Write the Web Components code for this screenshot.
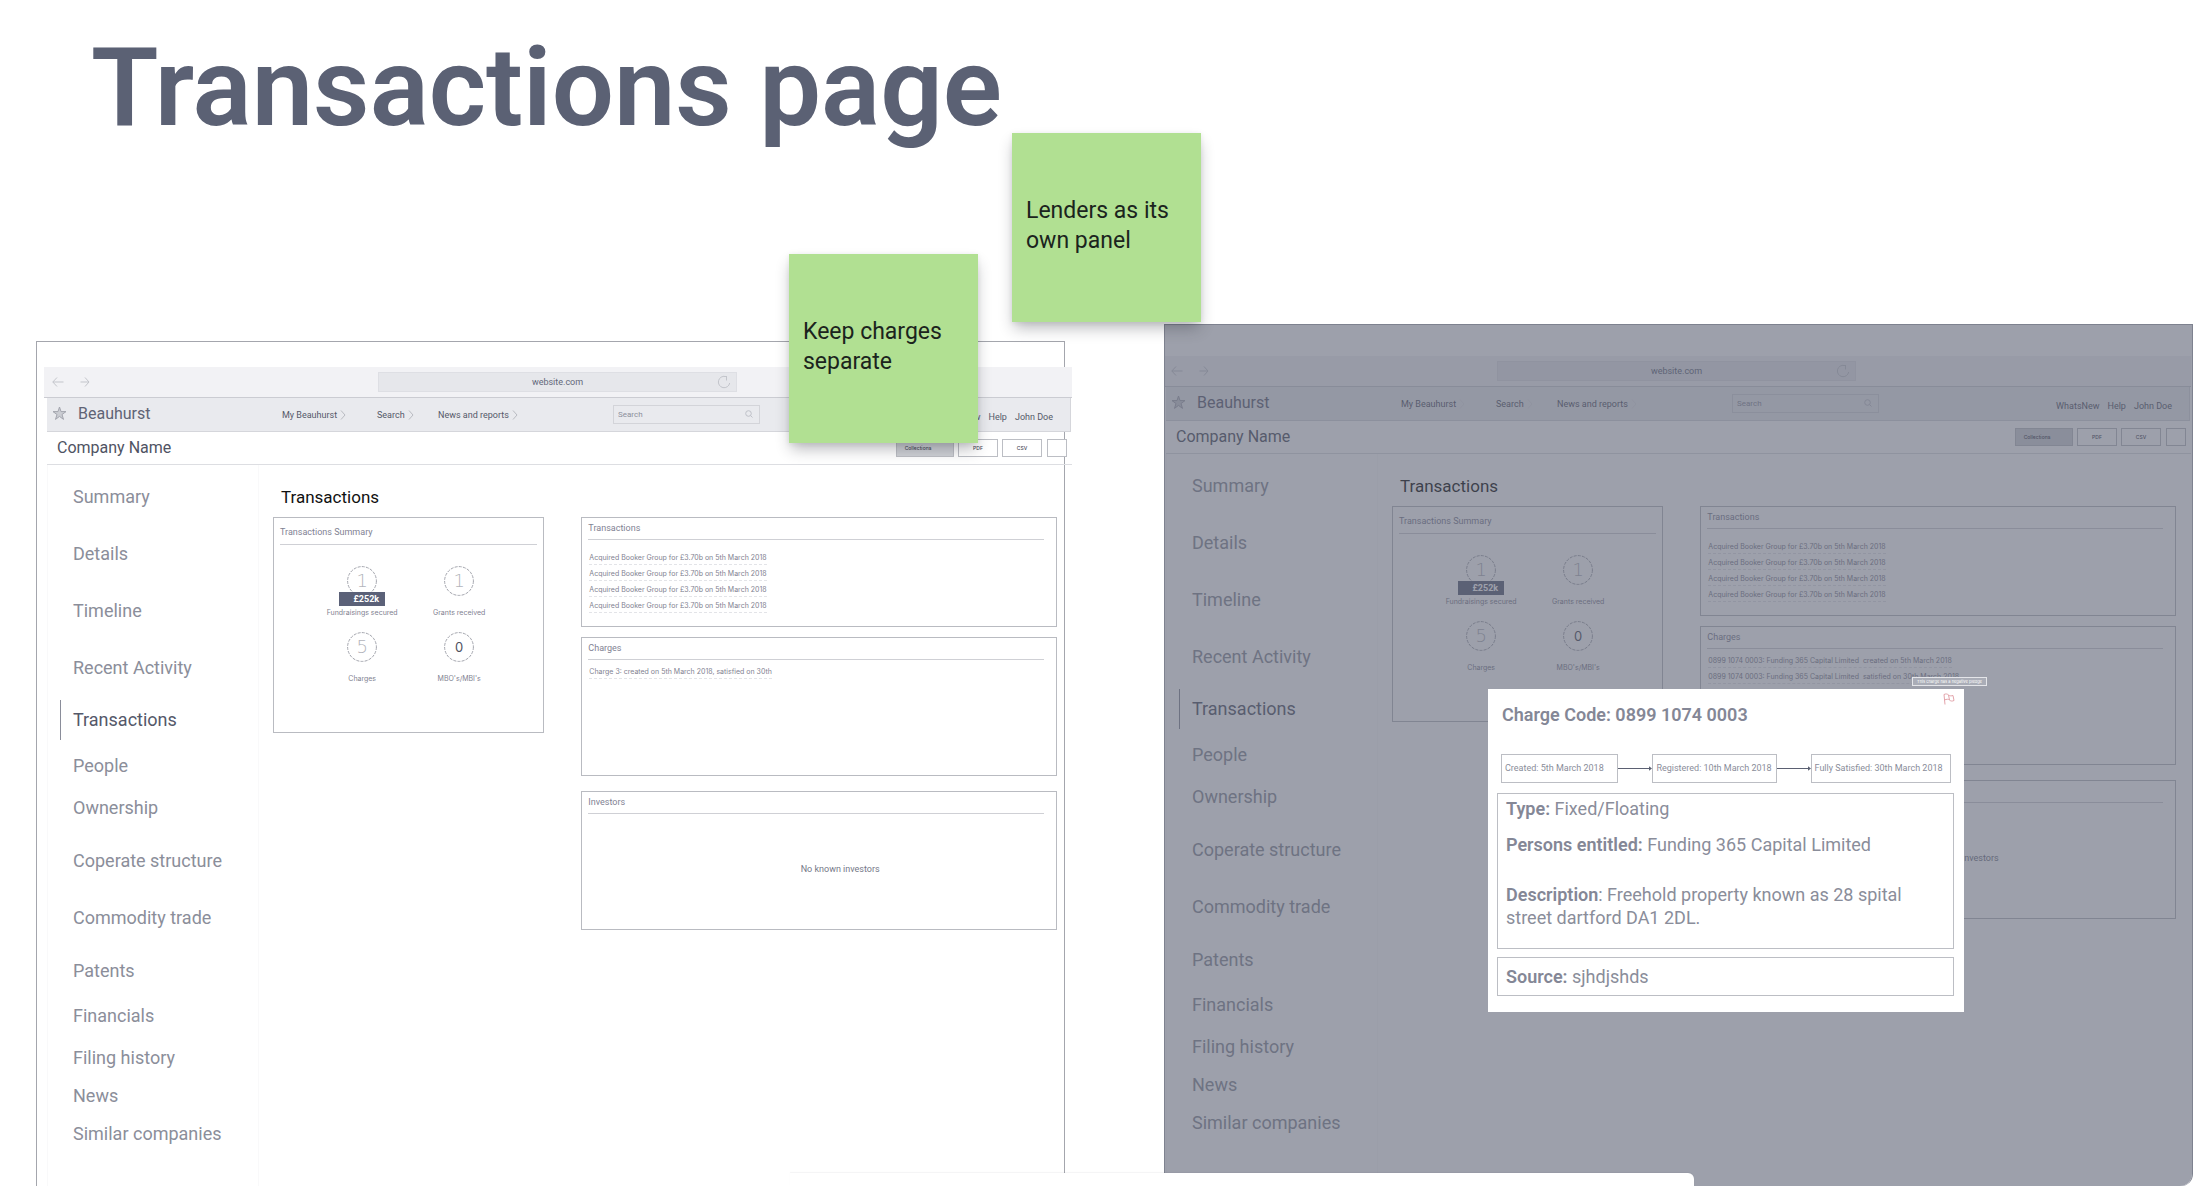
<!DOCTYPE html>
<html lang="en">
<head>
<meta charset="utf-8">
<title>Transactions page</title>
<style>
  body { margin: 0; background: #fff; font-family: Roboto, "Liberation Sans", sans-serif; }
</style>
</head>
<body>
<design-canvas>
  <span slot="title">Transactions page</span>
  <sticky-note slot="notes" class="charges">Keep charges separate</sticky-note>
  <sticky-note slot="notes" class="lenders">Lenders as its own panel</sticky-note>
  <company-board slot="boards" class="plain">
    <entry-row slot="charges">Charge 3: created on 5th March 2018, satisfied on 30th</entry-row>
  </company-board>
  <company-board slot="boards" class="dimmed">
    <entry-row slot="charges">0899 1074 0003: Funding 365 Capital Limited&nbsp; created on 5th March 2018</entry-row>
    <entry-row slot="charges">0899 1074 0003: Funding 365 Capital Limited&nbsp; satisfied on 30th March 2018</entry-row>
    <charge-dialog slot="dialog"></charge-dialog>
  </company-board>
</design-canvas>

<script>
function define(name, html) {
  const template = document.createElement('template');
  template.innerHTML = html;
  customElements.define(name, class extends HTMLElement {
    constructor() {
      super();
      this.attachShadow({ mode: 'open' }).append(template.content.cloneNode(true));
    }
  });
}

define('design-canvas', `
<style>
  :host { display: flex; flex-direction: column; position: relative; height: 100vh; overflow: hidden; }
  h1 { margin: 0; box-sizing: border-box; height: 324px; flex: none; padding: 33px 0 0 91px;
    font-size: 110px; line-height: 110px; font-weight: 600; color: #5b6174; }
  .boards { flex: 1; display: grid; grid-template-columns: 1fr 1fr; gap: 99px; padding: 0 7px 0 36px; }
  ::slotted(.plain) { margin-top: 17px; --top: 25px; --start: 7px; --end: -8px; }
  ::slotted(.dimmed) { --top: 31px; --start: -2px; --end: 1px; --dim: block; --chevron: #dfe0e4; }
  ::slotted(.charges) { left: 789px; top: 254px; }
  ::slotted(.lenders) { left: 1012px; top: 133px; }
  .tray { position: absolute; left: 790px; bottom: 0; width: 904px; height: 13px;
    background: #fff; border-top-right-radius: 6px; box-shadow: 0 -1px 1px rgba(70,74,90,.06); }
</style>
<h1><slot name="title"></slot></h1>
<div class="boards"><slot name="boards"></slot></div>
<slot name="notes"></slot>
<div class="tray"></div>
`);

define('sticky-note', `
<style>
  :host { position: absolute; z-index: 3; box-sizing: border-box; width: 189px; height: 189px; padding: 0 14px 3px;
    display: flex; align-items: center; background: #b1e092; color: #1b241d;
    font-size: 23px; line-height: 30px; box-shadow: 0 8px 14px -2px rgba(40,42,54,.32), 0 1px 5px rgba(40,42,54,.08); }
</style>
<span><slot></slot></span>
`);

define('entry-row', `
<style>
  :host { display: block; line-height: 12px; font-family: Inter, Roboto, sans-serif; font-size: 7px; color: #7f8291; }
  a { display: inline-block; color: inherit; text-decoration: none; border-bottom: 1px dashed #e3e4e8; }
</style>
<a href="#"><slot></slot></a>
`);

define('info-card', `
<style>
  :host { display: flex; flex-direction: column; box-sizing: border-box; border: 1px solid #b9bbc1; }
  h3 { margin: 0 12px 0 6px; padding: 3px 0 4px; font-size: 9px; line-height: 14px; font-weight: 400;
    color: #7f8293; border-bottom: 1px solid #cfd0d5; }
  :host(.summary) h3 { margin-right: 6px; padding: 7px 0 5px; }
  .body { flex: 1; display: flex; flex-direction: column; gap: 3px; padding: 12px 7px; }
  :host(.near) .body { padding-top: 6px; }
  :host(.centred) .body { align-items: center; justify-content: center; padding: 0 0 5px 42px;
    font-size: 9px; color: #757888; }
  :host(.summary) .body { padding: 21px 0 0 4px; }
</style>
<h3><slot name="heading"></slot></h3>
<div class="body"><slot></slot></div>
`);

define('stat-figure', `
<style>
  :host { position: relative; display: flex; flex-direction: column; align-items: center; gap: 12px; }
  .ring { position: relative; width: 30px; height: 30px; display: grid; place-items: center;
    font: 200 18px/30px "DejaVu Sans", sans-serif; color: #b2b4bb; }
  :host(.solid) .ring { font: 400 13px/30px Inter, Roboto, sans-serif; color: #4e515e; }
  svg { position: absolute; inset: 0; }
  .label { font-family: Inter, Roboto, sans-serif; font-size: 7px; line-height: 10px; white-space: nowrap; color: #7f8291; }
  ::slotted(b) { position: absolute; top: 26px; left: 50%; transform: translateX(-50%); box-sizing: border-box;
    width: 46px; padding-right: 6px; text-align: right; background: #5b6178; color: #fff;
    font-size: 9px; line-height: 14px; }
</style>
<div class="ring"><svg width="30" height="30" viewBox="0 0 30 30" fill="none" stroke="#a3a5ad" stroke-width="1" stroke-dasharray="3 1.2"><circle cx="15" cy="15" r="14.4"/></svg><slot name="value"></slot></div>
<div class="label"><slot></slot></div>
<slot name="badge"></slot>
`);

define('side-nav', `
<style>
  :host { display: block; width: 212px; flex: none; box-sizing: border-box; padding: 20px 0 26px 25px;
    border: solid #f9f9fa; border-width: 0 1px; }
  ul { list-style: none; margin: 0; padding: 0; font-size: 18px; line-height: 24px; }
  a { color: #8b8e9a; text-decoration: none; }
  li { margin-bottom: 33px; }
  .m { margin-bottom: 29px; } .s { margin-bottom: 21px; } .xs { margin-bottom: 18px; } .xxs { margin-bottom: 14px; }
  .active { margin: -9px 0 14px -13px; border-left: 1px solid #8a8d9a; padding-left: 12px; line-height: 40px; }
  .active a { color: #545869; }
</style>
<nav><ul>
  <li><a href="#">Summary</a></li>
  <li><a href="#">Details</a></li>
  <li><a href="#">Timeline</a></li>
  <li class="m"><a href="#">Recent Activity</a></li>
  <li class="active"><a href="#">Transactions</a></li>
  <li class="xs"><a href="#">People</a></li>
  <li class="m"><a href="#">Ownership</a></li>
  <li><a href="#">Coperate structure</a></li>
  <li class="m"><a href="#">Commodity trade</a></li>
  <li class="s"><a href="#">Patents</a></li>
  <li class="xs"><a href="#">Financials</a></li>
  <li class="xxs"><a href="#">Filing history</a></li>
  <li class="xxs"><a href="#">News</a></li>
  <li class="xxs"><a href="#">Similar companies</a></li>
</ul></nav>
`);

define('browser-bar', `
<style>
  :host { display: grid; grid-template-columns: 1fr 359px 335px; align-items: center; height: 30px;
    background: #f2f2f5; border-bottom: 1px solid #cbccd2; }
  .arrows { display: flex; gap: 16px; padding-left: 8px; }
  .url { display: grid; grid-template-columns: 20px 1fr 20px; align-items: center; height: 20px;
    background: #e6e7eb; box-shadow: inset 0 0 0 1px #dedfe4; text-align: center; font-size: 9px; color: #63677a; }
  svg { fill: none; stroke: #c3c5cb; }
  button { border: 0; padding: 0; background: none; display: flex; }
</style>
<div class="arrows">
  <button aria-label="Back"><svg width="12" height="12" viewBox="0 0 12 12"><path d="M11.5 6H.8M5 1.5.8 6 5 10.5"/></svg></button>
  <button aria-label="Forward"><svg width="12" height="12" viewBox="0 0 12 12"><path d="M.5 6h8.2M5 1.5 9 6l-4 4.500"/></svg></button>
</div>
<div class="url"><i></i><span>website.com</span>
  <button aria-label="Reload"><svg width="14" height="14" viewBox="0 0 14 14"><path d="M8.500 1.500A5.700 5.700 0 1 0 12.700 8M9.500 1v4.500M10 1.500H6.500"/></svg></button>
</div>
`);

define('main-nav', `
<style>
  :host { display: grid; grid-template-columns: 235px 95px 61px 175px 147px 1fr; align-items: center;
    height: 34px; margin: 0 1px 0 3px; background: #e9eaee; box-shadow: inset 0 -1px #d5d6db, inset -1px 0 #d5d6db;
    font-size: 9px; color: #555969; }
  a { color: inherit; text-decoration: none; white-space: nowrap; }
  .brand { display: flex; align-items: center; gap: 11px; padding: 0 0 3px 5px; font-size: 16px; color: #5f6375; }
  .item { display: flex; align-items: center; gap: 3px; }
  .item svg { fill: none; stroke: var(--chevron, #b9bbc2); }
  .search { display: flex; align-items: center; box-sizing: border-box; height: 19px; margin-bottom: 2px;
    border: 1px solid #d3d4d9; padding: 0 6px 0 4px; }
  input { flex: 1; min-width: 0; border: 0; padding: 0; background: none; font: 8px Roboto, sans-serif; color: #555969; outline: 0; }
  input::placeholder { color: #8d909c; opacity: 1; }
  .user { display: flex; justify-content: flex-end; gap: 8px; padding: 3px 18px 0 0; }
</style>
<a class="brand" href="#"><svg width="15" height="15" viewBox="0 0 15 15" fill="#cbcdd3" stroke="#a3a5ae"><path d="M7.500 1 9 5.600h5L10 8.500l1.500 4.900-4-3-4 3L5 8.500 1 5.600h5z"/></svg>Beauhurst</a>
<a class="item" href="#">My Beauhurst<svg width="6" height="10" viewBox="0 0 6 10"><path d="M1 .5 5 5 1 9.500"/></svg></a>
<a class="item" href="#">Search<svg width="6" height="10" viewBox="0 0 6 10"><path d="M1 .5 5 5 1 9.500"/></svg></a>
<a class="item" href="#">News and reports<svg width="6" height="10" viewBox="0 0 6 10"><path d="M1 .5 5 5 1 9.500"/></svg></a>
<label class="search"><input type="text" placeholder="Search" aria-label="Search"><svg width="8" height="8" viewBox="0 0 8 8" fill="none" stroke="#bfc1c8"><circle cx="3.500" cy="3.500" r="2.800"/><path d="M5.500 5.500 7.500 7.500"/></svg></label>
<div class="user"><a href="#">WhatsNew</a><a href="#">Help</a><a href="#">John Doe</a></div>
`);

define('company-bar', `
<style>
  :host { display: flex; justify-content: space-between; align-items: center; box-sizing: border-box; height: 33px;
    margin-left: 3px; padding: 0 5px 0 10px; border-bottom: 1px solid #dddee2; }
  h2 { margin: 0; font-size: 16px; line-height: 24px; font-weight: 400; color: #4f5363; }
  .actions { display: flex; gap: 4px; }
  button { box-sizing: border-box; width: 40px; height: 18px; padding: 0; border: 1px solid #bcbec4; background: #fff;
    font: 500 5px/16px Inter, sans-serif; color: #3f4353; }
  .main { width: 58px; background: #cfd1d6; padding-right: 14px; }
  .more { width: 20px; margin-left: 1px; }
</style>
<h2>Company Name</h2>
<div class="actions"><button class="main">Collections</button><button>PDF</button><button>CSV</button><button class="more" aria-label="More"></button></div>
`);

define('company-board', `
<style>
  :host { display: block; position: relative; box-sizing: border-box; border: 1px solid #a4a6ad; border-bottom: 0; }
  :host(.dimmed) { border-radius: 0 0 12px 0; border-color: #7e828f; }
  .clip { height: 100%; padding-top: var(--top); box-sizing: border-box; }
  :host(.dimmed) .clip { overflow: hidden; border-radius: inherit; }
  .page { margin: 0 var(--end) 0 var(--start); }
  .columns { display: flex; margin-left: 3px; }
  main { flex: 1; padding: 20px 15px 0 14px; }
  h2 { margin: 0 0 8px 8px; font-size: 17px; line-height: 24px; font-weight: 400; color: #111; }
  .cards { display: grid; grid-template-columns: 271fr 475fr; gap: 37px; align-items: start; }
  .stack { display: flex; flex-direction: column; gap: 10px; }
  .summary { height: 216px; }
  .transactions { height: 110px; }
  .tall { height: 139px; }
  .last { margin-top: 5px; }
  .stats { display: grid; grid-template-columns: 97px 97px; justify-content: center; row-gap: 14px; }
  .shade { display: var(--dim, none); position: absolute; inset: 0; background: rgba(91,97,115,.6); border-radius: inherit; }
</style>
<div class="clip"><div class="page">
  <browser-bar></browser-bar>
  <main-nav></main-nav>
  <company-bar></company-bar>
  <div class="columns">
    <side-nav></side-nav>
    <main>
      <h2>Transactions</h2>
      <div class="cards">
        <info-card class="summary"><span slot="heading">Transactions Summary</span>
          <div class="stats">
            <stat-figure><span slot="value">1</span>Fundraisings secured<b slot="badge">£252k</b></stat-figure>
            <stat-figure><span slot="value">1</span>Grants received</stat-figure>
            <stat-figure><span slot="value">5</span>Charges</stat-figure>
            <stat-figure class="solid"><span slot="value">0</span>MBO's/MBI's</stat-figure>
          </div>
        </info-card>
        <div class="stack">
          <info-card class="transactions"><span slot="heading">Transactions</span>
            <entry-row>Acquired Booker Group for £3.70b on 5th March 2018</entry-row>
            <entry-row>Acquired Booker Group for £3.70b on 5th March 2018</entry-row>
            <entry-row>Acquired Booker Group for £3.70b on 5th March 2018</entry-row>
            <entry-row>Acquired Booker Group for £3.70b on 5th March 2018</entry-row>
          </info-card>
          <info-card class="tall near"><span slot="heading">Charges</span><slot name="charges"></slot></info-card>
          <info-card class="tall last centred"><span slot="heading">Investors</span>No known investors</info-card>
        </div>
      </div>
    </main>
  </div>
</div></div>
<div class="shade"></div>
<slot name="dialog"></slot>
`);

define('charge-dialog', `
<style>
  :host { position: absolute; left: 323px; top: 364px; width: 476px; box-sizing: border-box; padding: 15px 10px 16px 9px;
    background: #fff; color: #8a8d9a; font-size: 18px; line-height: 23px; }
  h3 { margin: 0 5px 28px; font-size: 18px; line-height: 22px; font-weight: 600; color: #848796; }
  b { font-weight: 600; color: #848796; }
  ol { list-style: none; display: flex; margin: 0 3px 10px 4px; padding: 0; font-size: 9px; line-height: 27px; white-space: nowrap; }
  li { flex: 1 1 117px; border: 1px solid #bcbec4; padding-left: 3px; }
  li:nth-of-type(2) { flex-basis: 124px; }
  li:nth-of-type(3) { flex-basis: 141px; }
  svg { display: block; flex: none; align-self: center; }
  section { border: 1px solid #bcbec4; padding: 3px 8px 19px; }
  section + section { margin-top: 8px; padding: 7px 8px; }
  p { margin: 0; }
  p + p { margin-top: 13px; }
  p + p + p { margin-top: 27px; }
  .flag { position: absolute; right: 9px; top: 4px; border: 0; padding: 0; background: none; display: flex; }
  .tip { position: absolute; right: -23px; top: -12px; box-sizing: border-box; width: 75px; border: 1px solid #e4e5e9;
    background: #aaadb7; color: #fff; font: 4px/7px Inter, sans-serif; text-align: center; white-space: nowrap; }
</style>
<div class="tip">This charge has a negative pledge</div>
<button class="flag" aria-label="Flag"><svg width="12" height="12" viewBox="0 0 12 12" fill="none" stroke="#e3a3aa"><path d="M2 11.500 1 1.500M1 1.500C3 .5 4.500 1 5.500 2s3 1 4.500.500l1 5c-2 1-3.500.500-4.500-.500S3.500 6 1.500 7M5.500 2l1 5"/></svg></button>
<h3>Charge Code: 0899 1074 0003</h3>
<ol>
  <li>Created: 5th March 2018</li>
  <svg width="34" height="7" viewBox="0 0 34 7"><path d="M0 3.500H32" stroke="#5b6072" fill="none"/><path d="M31 1.200 34 3.500 31 5.800z" fill="#5b6072"/></svg>
  <li>Registered: 10th March 2018</li>
  <svg width="34" height="7" viewBox="0 0 34 7"><path d="M0 3.500H32" stroke="#5b6072" fill="none"/><path d="M31 1.200 34 3.500 31 5.800z" fill="#5b6072"/></svg>
  <li>Fully Satisfied: 30th March 2018</li>
</ol>
<section>
  <p><b>Type:</b> Fixed/Floating</p>
  <p><b>Persons entitled:</b> Funding 365 Capital Limited</p>
  <p><b>Description</b>: Freehold property known as 28 spital street dartford DA1 2DL.</p>
</section>
<section><p><b>Source:</b> sjhdjshds</p></section>
`);
</script>
</body>
</html>
